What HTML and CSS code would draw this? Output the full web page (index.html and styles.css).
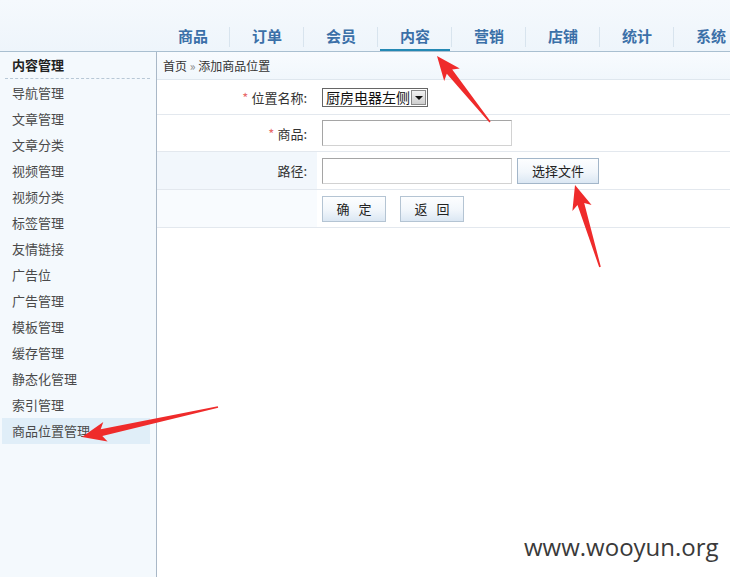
FILE: index.html
```html
<!DOCTYPE html>
<html lang="zh-CN">
<head>
<meta charset="utf-8">
<title>添加商品位置</title>
<link rel="stylesheet" href="styles.css">
</head>
<body>
<div class="page">
  <header class="header">
    <nav class="nav">
      <a class="tab">商品</a>
      <a class="tab">订单</a>
      <a class="tab">会员</a>
      <a class="tab active">内容</a>
      <a class="tab">营销</a>
      <a class="tab">店铺</a>
      <a class="tab">统计</a>
      <a class="tab">系统</a>
    </nav>
  </header>
  <div class="body">
    <aside class="sidebar">
      <div class="side-title">内容管理</div>
      <ul class="side-list">
        <li>导航管理</li>
        <li>文章管理</li>
        <li>文章分类</li>
        <li>视频管理</li>
        <li>视频分类</li>
        <li>标签管理</li>
        <li>友情链接</li>
        <li>广告位</li>
        <li>广告管理</li>
        <li>模板管理</li>
        <li>缓存管理</li>
        <li>静态化管理</li>
        <li>索引管理</li>
        <li class="current">商品位置管理</li>
      </ul>
    </aside>
    <main class="main">
      <div class="crumb">首页 <span class="raquo">»</span> 添加商品位置</div>
      <div class="form">
        <div class="row r1">
          <div class="label"><span class="req">*</span> 位置名称:</div>
          <div class="value">
            <span class="select"><span class="select-text">厨房电器左侧</span><span class="select-btn"><span class="tri"></span></span></span>
          </div>
        </div>
        <div class="row r2">
          <div class="label"><span class="req">*</span> 商品:</div>
          <div class="value"><span class="input"></span></div>
        </div>
        <div class="row r3">
          <div class="label shaded">路径:</div>
          <div class="value"><span class="input"></span><span class="btn btn-file">选择文件</span></div>
        </div>
        <div class="row r4">
          <div class="label light"></div>
          <div class="value"><span class="btn btn-small">确 定</span><span class="btn btn-small">返 回</span></div>
        </div>
      </div>
    </main>
  </div>
  <div class="watermark">www.wooyun.org</div>
  <svg class="arrows" width="730" height="577" viewBox="0 0 730 577">
    <polygon fill="#ef2b2b" points="437,56 459.8,68.4 452.2,69.4 490.6,121.5 489.4,122.5 446.8,73.8 444.2,81"/>
    <polygon fill="#ef2b2b" points="575,185 591.6,205.1 584.2,203.1 600.8,266.8 599.2,267.2 577.5,205.1 572.4,210.9"/>
    <polygon fill="#ef2b2b" points="82,437 103.3,422 100.7,429.3 217.8,406.2 218.2,407.8 102.3,436.1 107.6,441.6"/>
  </svg>
</div>
</body>
</html>
```

FILE: styles.css
```css
* { box-sizing: border-box; }
html, body { margin: 0; padding: 0; }
body {
  font-family: "Noto Sans CJK SC", "Liberation Sans", sans-serif;
  color: #333;
  background: #fff;
}
.page {
  position: relative;
  width: 730px;
  height: 577px;
  overflow: hidden;
  display: flex;
  flex-direction: column;
}
.header {
  height: 52px;
  flex: none;
  background: linear-gradient(#f5f9fd, #eef5fb);
  border-bottom: 1px solid #a9bfd0;
  display: flex;
  align-items: flex-end;
  padding-left: 156px;
  overflow: hidden;
}
.nav {
  display: flex;
  flex: none;
  margin-bottom: -1px;
}
.tab {
  position: relative;
  width: 74px;
  height: 26px;
  flex: none;
  text-align: center;
  font-size: 15px;
  font-weight: bold;
  line-height: 20px;
  color: #3b70a8;
  border-bottom: 3px solid transparent;
}
.tab::after {
  content: "";
  position: absolute;
  right: 0;
  top: 1px;
  width: 1px;
  height: 20px;
  background: #d8e4ee;
}
.tab.active {
  border-bottom-color: #2489b4;
  margin: 0 2px;
  width: 70px;
}
.tab.active::after { right: -2px; }
.body {
  flex: 1;
  display: flex;
  min-height: 0;
}
.sidebar {
  width: 157px;
  flex: none;
  background: #f4f9fd;
  border-right: 1px solid #a9b8c7;
  padding: 0 6px 0 2px;
}
.side-title {
  height: 27px;
  line-height: 26px;
  margin: 0 0 0 3px;
  padding-left: 7px;
  font-size: 13px;
  font-weight: bold;
  color: #222;
  border-bottom: 1px dashed #b8c8d6;
}
.side-list {
  list-style: none;
  margin: 1px 0 0;
  padding: 0;
}
.side-list li {
  height: 26px;
  line-height: 26px;
  padding-left: 10px;
  font-size: 13px;
  color: #4a4a4a;
}
.side-list li.current {
  background: #e0eef8;
}
.main {
  flex: 1;
  min-width: 0;
}
.crumb {
  height: 28px;
  line-height: 27px;
  padding-left: 6px;
  font-size: 12px;
  color: #333;
  background: linear-gradient(#f8fbfe, #f1f7fc);
  border-bottom: 1px solid #dfe7ee;
}
.raquo { color: #888; }
.row {
  display: grid;
  grid-template-columns: 160px 1fr;
  border-bottom: 1px solid #e3e8ee;
}
.r1 { height: 35px; }
.r2 { height: 37px; }
.r3 { height: 38px; }
.r4 { height: 38px; }
.label {
  display: flex;
  align-items: center;
  justify-content: flex-end;
  padding-right: 10px;
  font-size: 13px;
  color: #333;
}
.label.shaded { background: #f2f7fc; }
.label.light { background: #f8fbfe; }
.req { color: #e86a6a; margin-right: 3px; }
.value {
  display: flex;
  align-items: center;
  gap: 5px;
  padding-left: 5px;
}
.select {
  display: flex;
  align-items: center;
  width: 106px;
  height: 19px;
  border: 1px solid #666;
  background: #fff;
  padding: 0 1px 0 3px;
  justify-content: space-between;
}
.select-text {
  font-size: 14px;
  color: #111;
  line-height: 17px;
}
.select-btn {
  width: 15px;
  height: 15px;
  border: 1px solid #8a8a8a;
  background: linear-gradient(#f2f2f2, #cfcfcf);
  display: flex;
  align-items: center;
  justify-content: center;
}
.tri {
  width: 0;
  height: 0;
  border-left: 4px solid transparent;
  border-right: 4px solid transparent;
  border-top: 4px solid #111;
  margin-top: 2px;
}
.input {
  display: block;
  width: 190px;
  height: 26px;
  border: 1px solid;
  border-color: #a5a5a5 #d2d2d2 #d2d2d2 #a5a5a5;
  background: #fff;
}
.btn {
  display: flex;
  align-items: center;
  justify-content: center;
  height: 26px;
  border: 1px solid #a3b6c9;
  background: linear-gradient(#fdfeff 0%, #f1f6fb 55%, #dbe7f3 100%);
  font-size: 13px;
  color: #222;
}
.btn-file { width: 82px; }
.btn-small {
  width: 64px;
  word-spacing: 6px;
  border-color: #b4c4d3;
}
.r4 .value { gap: 14px; }
.watermark {
  position: absolute;
  left: 524px;
  top: 530px;
  font-family: "Open Sans", "DejaVu Sans", sans-serif;
  font-size: 24px;
  color: #3a3a3a;
}
.arrows {
  position: absolute;
  left: 0;
  top: 0;
  pointer-events: none;
}
```
